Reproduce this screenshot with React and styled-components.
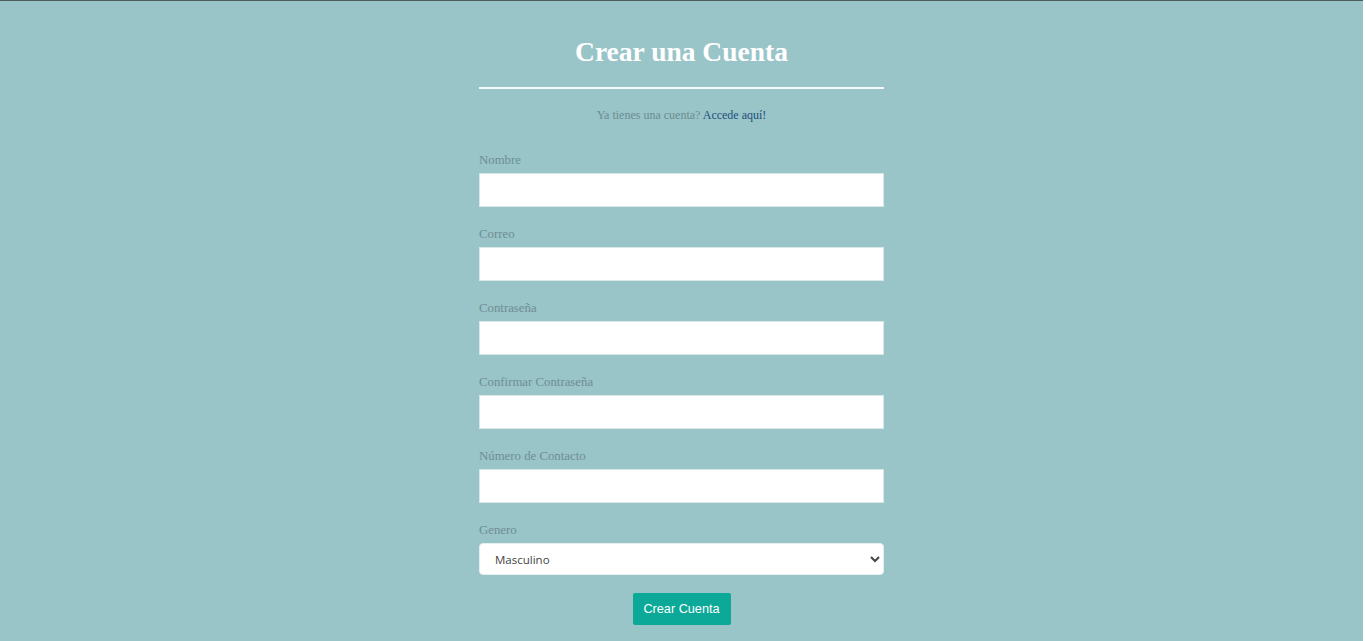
import React, { useState } from 'react';
import styled, { createGlobalStyle } from 'styled-components';

const GlobalStyle = createGlobalStyle`
  html, body {
    margin: 0;
    padding: 0;
    height: 100%;
    background: #ffffff;
  }
  #root {
    height: 100%;
  }
`;

const Page = styled.div`
  height: 100%;
  margin-right: 3px;
  background: #99c4c8;
  border-top: 1px solid #4b5b5e;
  box-sizing: border-box;
  overflow: hidden;
  font-family: "Liberation Serif", "Times New Roman", serif;
`;

const FormBox = styled.form`
  width: 405px;
  margin: 0 auto;
  padding-top: 35px;
`;

const Title = styled.h1`
  margin: 0;
  color: #ffffff;
  font-size: 27.5px;
  font-weight: bold;
  text-align: center;
  line-height: 32px;
`;

const Divider = styled.hr`
  margin: 19px 0 0;
  border: none;
  height: 2px;
  background: #f4f8f8;
`;

const LoginHint = styled.p`
  margin: 18px 0 0;
  text-align: center;
  font-size: 12px;
  line-height: 16px;
  color: #6b8c92;

  a {
    color: #1d4f7a;
    text-decoration: none;
  }
`;

const Field = styled.div`
  display: flex;
  flex-direction: column;
  margin-top: ${p => p.$first ? '29px' : '19px'};
`;

const Label = styled.label`
  font-size: 12.8px;
  line-height: 16px;
  color: #6f8e93;
  margin-bottom: 5px;
`;

const Input = styled.input`
  box-sizing: border-box;
  height: 34px;
  width: 100%;
  border: 1px solid #d8e8ea;
  background: #ffffff;
  outline: none;
  padding: 0 10px;
`;

const Select = styled.select`
  box-sizing: border-box;
  height: 32px;
  width: 100%;
  border: 1px solid #e4eeef;
  border-radius: 4px;
  background: #ffffff;
  color: #444;
  font-family: "Open Sans", "Liberation Sans", sans-serif;
  font-size: 11.5px;
  padding: 0 11px;
  outline: none;
`;

const ButtonRow = styled.div`
  display: flex;
  justify-content: center;
  margin-top: 18px;
`;

const SubmitButton = styled.button`
  width: 98px;
  height: 32px;
  border: none;
  border-radius: 2px;
  background: #0ca898;
  color: #ffffff;
  font-family: "Liberation Sans", Arial, sans-serif;
  font-size: 12.7px;
  cursor: pointer;
`;

const fields = [
  { id: 'nombre', label: 'Nombre', type: 'text' },
  { id: 'correo', label: 'Correo', type: 'email' },
  { id: 'pass', label: 'Contraseña', type: 'password' },
  { id: 'pass2', label: 'Confirmar Contraseña', type: 'password' },
  { id: 'tel', label: 'Número de Contacto', type: 'tel' },
];

export default function App() {
  const [genero, setGenero] = useState('Masculino');

  return (
    <>
      <GlobalStyle />
      <Page>
        <FormBox onSubmit={e => e.preventDefault()}>
          <Title>Crear una Cuenta</Title>
          <Divider />
          <LoginHint>
            Ya tienes una cuenta? <a href="#">Accede aquí!</a>
          </LoginHint>

          {fields.map((f, i) => (
            <Field key={f.id} $first={i === 0}>
              <Label htmlFor={f.id}>{f.label}</Label>
              <Input id={f.id} type={f.type} />
            </Field>
          ))}

          <Field>
            <Label htmlFor="genero">Genero</Label>
            <Select id="genero" value={genero} onChange={e => setGenero(e.target.value)}>
              <option>Masculino</option>
              <option>Femenino</option>
            </Select>
          </Field>

          <ButtonRow>
            <SubmitButton type="submit">Crear Cuenta</SubmitButton>
          </ButtonRow>
        </FormBox>
      </Page>
    </>
  );
}
